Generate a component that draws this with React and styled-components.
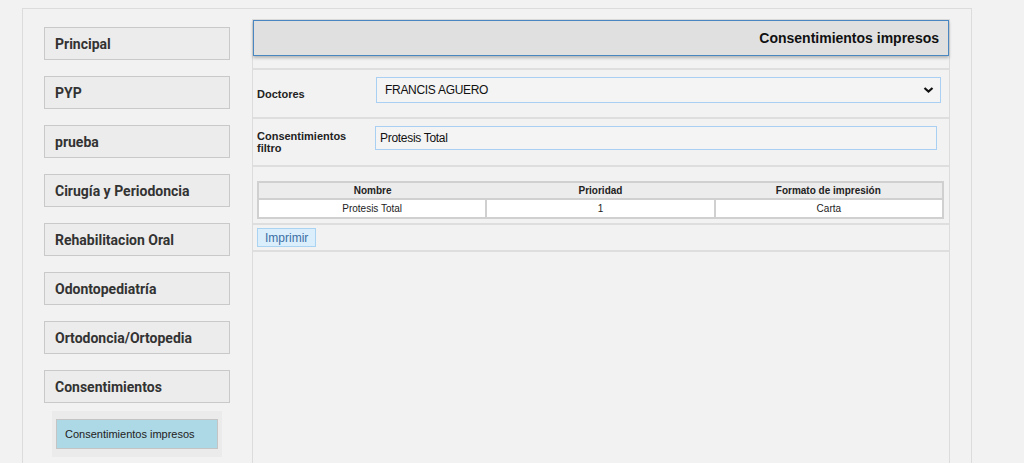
import React from "react";
import styled, { createGlobalStyle } from "styled-components";

const Global = createGlobalStyle`
  html, body { margin: 0; padding: 0; background: #f2f2f2; overflow: hidden; }
  * { box-sizing: border-box; }
  body { font-family: "Liberation Sans", Arial, sans-serif; color: #222; }
`;

const Frame = styled.div`
  margin: 8px 0 0 22px;
  width: 950px;
  min-height: calc(100vh - 8px);
  border: 1px solid #dcdcdc;
  border-bottom: none;
  display: flex;
  align-items: stretch;
  padding: 0 21px 0 21px;
  gap: 22px;
  background: #f2f2f2;
`;

const Sidebar = styled.nav`
  width: 186px;
  flex: none;
  padding-top: 18px;
  display: flex;
  flex-direction: column;
`;

const MenuItem = styled.div`
  height: 33px;
  background: #ececec;
  border: 1px solid #c9c9c9;
  display: flex;
  align-items: center;
  padding-left: 10px;
  font-family: Roboto, "Liberation Sans", sans-serif;
  font-weight: 700;
  font-size: 14px;
  color: #333;
  & + & { margin-top: 16px; }
`;

const SubMenu = styled.div`
  margin: 8px 8px 0 8px;
  background: #ebebeb;
  padding: 8px 4px;
`;

const SubItem = styled.div`
  height: 30px;
  background: #add8e6;
  border: 1px solid #c4c4c4;
  display: flex;
  align-items: center;
  padding-left: 8px;
  font-size: 11px;
  color: #222;
`;

const Main = styled.section`
  flex: 1;
  margin-top: 10px;
  border: 1px solid #dcdcdc;
  border-bottom: none;
  display: flex;
  flex-direction: column;
`;

const Header = styled.div`
  height: 36px;
  background: #e0e0e0;
  border: 1px solid #4a86bf;
  box-shadow: 0 2px 3px rgba(0, 0, 0, 0.25);
  display: flex;
  align-items: center;
  justify-content: flex-end;
  padding-right: 9px;
  font-weight: 700;
  font-size: 14px;
  color: #111;
  margin-bottom: 12px;
`;

const Row = styled.div`
  border-top: 2px solid #dedede;
  display: flex;
  align-items: center;
  height: ${(p) => p.$h}px;
  padding: ${(p) => p.$pad || "0 0 0 4px"};
`;

const Label = styled.label`
  width: 100px;
  margin-right: 19px;
  flex: none;
  font-weight: 700;
  font-size: 11px;
  line-height: 12px;
  color: #222;
`;

const SelectBox = styled.div`
  position: relative;
  flex: 1;
  align-self: flex-start;
  margin: 7px 8px 0 0;
  height: 26px;
  border: 1px solid #a9cff2;
  background: #f4f4f4;
  display: flex;
  align-items: center;
  padding-left: 8px;
  font-size: 12px;
  letter-spacing: -0.3px;
  color: #111;
`;

const Chevron = styled.svg`
  position: absolute;
  right: 6px;
  top: 50%;
  transform: translateY(-50%);
`;

const Input = styled.input`
  flex: 1;
  align-self: flex-start;
  margin: 7px 12px 0 -1px;
  height: 24px;
  border: 1px solid #a9cff2;
  background: #f4f4f4;
  padding: 0 0 0 4px;
  font-family: "Liberation Sans", Arial, sans-serif;
  font-size: 12px;
  letter-spacing: -0.3px;
  color: #111;
  outline: none;
`;

const Table = styled.table`
  width: 687px;
  table-layout: fixed;
  border-collapse: collapse;
  border: 2px solid #d0d0d0;
  font-size: 10px;
  text-align: center;
`;

const Th = styled.th`
  height: 17px;
  background: #ececec;
  font-weight: 700;
  color: #222;
  padding: 0;
  border-bottom: 1px solid #d0d0d0;
`;

const Td = styled.td`
  height: 19px;
  background: #fff;
  border: 2px solid #d0d0d0;
  padding: 0;
  color: #222;
`;

const Button = styled.button`
  height: 19px;
  padding: 0 7px;
  background: #dbeefb;
  border: 1px solid #a9d3f0;
  color: #3b6ea5;
  font-family: "Liberation Sans", Arial, sans-serif;
  font-size: 12px;
  cursor: pointer;
`;

const Rest = styled.div`
  border-top: 2px solid #dedede;
  flex: 1;
`;

const menus = [
  "Principal",
  "PYP",
  "prueba",
  "Cirugía y Periodoncia",
  "Rehabilitacion Oral",
  "Odontopediatría",
  "Ortodoncia/Ortopedia",
  "Consentimientos",
];

export default function App() {
  return (
    <>
      <Global />
      <Frame>
        <Sidebar>
          {menus.map((m) => (
            <MenuItem key={m}>{m}</MenuItem>
          ))}
          <SubMenu>
            <SubItem>Consentimientos impresos</SubItem>
          </SubMenu>
        </Sidebar>
        <Main>
          <Header>Consentimientos impresos</Header>
          <Row $h={49}>
            <Label>Doctores</Label>
            <SelectBox>
              FRANCIS AGUERO
              <Chevron width="11" height="7" viewBox="0 0 11 7">
                <path d="M1.5 1.5 L5.5 5 L9.5 1.5" fill="none" stroke="#111" strokeWidth="2.2" />
              </Chevron>
            </SelectBox>
          </Row>
          <Row $h={48}>
            <Label>Consentimientos filtro</Label>
            <Input defaultValue="Protesis Total" />
          </Row>
          <Row $h={58} $pad="13px 0 4px 4px">
            <Table>
              <thead>
                <tr>
                  <Th>Nombre</Th>
                  <Th>Prioridad</Th>
                  <Th>Formato de impresión</Th>
                </tr>
              </thead>
              <tbody>
                <tr>
                  <Td>Protesis Total</Td>
                  <Td>1</Td>
                  <Td>Carta</Td>
                </tr>
              </tbody>
            </Table>
          </Row>
          <Row $h={27}>
            <Button>Imprimir</Button>
          </Row>
          <Rest />
        </Main>
      </Frame>
    </>
  );
}
